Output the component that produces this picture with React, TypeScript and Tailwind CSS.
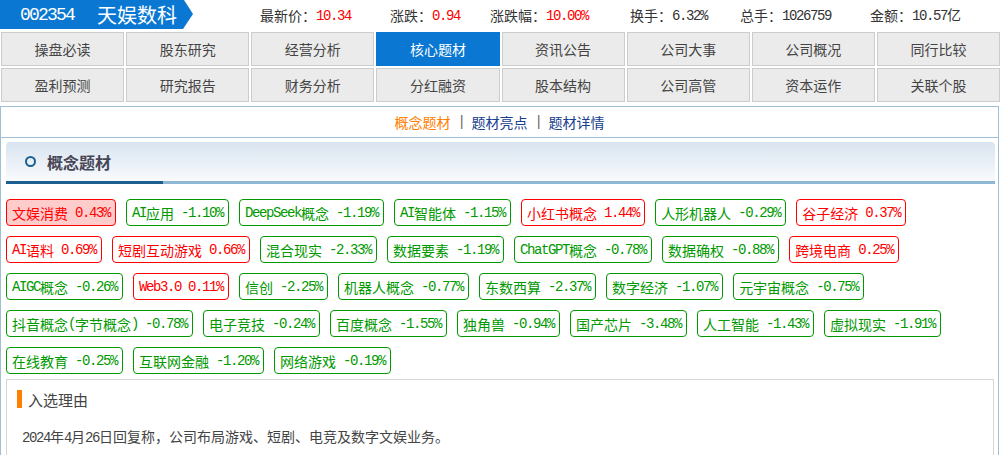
import React from 'react';

type Tag = { name: string; pct: string; up: boolean; hot?: boolean };

const navRows = [
  ['操盘必读', '股东研究', '经营分析', '核心题材', '资讯公告', '公司大事', '公司概况', '同行比较'],
  ['盈利预测', '研究报告', '财务分析', '分红融资', '股本结构', '公司高管', '资本运作', '关联个股'],
];

const stats = [
  { label: '最新价：', value: '10.34', red: true, w: 'w-[130px]' },
  { label: '涨跌：', value: '0.94', red: true, w: 'w-[100px]' },
  { label: '涨跌幅：', value: '10.00%', red: true, w: 'w-[140px]' },
  { label: '换手：', value: '6.32%', red: false, w: 'w-[110px]' },
  { label: '总手：', value: '1026759', red: false, w: 'w-[130px]' },
  { label: '金额：', value: '10.57亿', red: false, w: 'w-[120px]' },
];

const tags: Tag[] = [
  { name: '文娱消费', pct: '0.43%', up: true, hot: true },
  { name: 'AI应用', pct: '-1.10%', up: false },
  { name: 'DeepSeek概念', pct: '-1.19%', up: false },
  { name: 'AI智能体', pct: '-1.15%', up: false },
  { name: '小红书概念', pct: '1.44%', up: true },
  { name: '人形机器人', pct: '-0.29%', up: false },
  { name: '谷子经济', pct: '0.37%', up: true },
  { name: 'AI语料', pct: '0.69%', up: true },
  { name: '短剧互动游戏', pct: '0.66%', up: true },
  { name: '混合现实', pct: '-2.33%', up: false },
  { name: '数据要素', pct: '-1.19%', up: false },
  { name: 'ChatGPT概念', pct: '-0.78%', up: false },
  { name: '数据确权', pct: '-0.88%', up: false },
  { name: '跨境电商', pct: '0.25%', up: true },
  { name: 'AIGC概念', pct: '-0.26%', up: false },
  { name: 'Web3.0', pct: '0.11%', up: true },
  { name: '信创', pct: '-2.25%', up: false },
  { name: '机器人概念', pct: '-0.77%', up: false },
  { name: '东数西算', pct: '-2.37%', up: false },
  { name: '数字经济', pct: '-1.07%', up: false },
  { name: '元宇宙概念', pct: '-0.75%', up: false },
  { name: '抖音概念(字节概念)', pct: '-0.78%', up: false },
  { name: '电子竞技', pct: '-0.24%', up: false },
  { name: '百度概念', pct: '-1.55%', up: false },
  { name: '独角兽', pct: '-0.94%', up: false },
  { name: '国产芯片', pct: '-3.48%', up: false },
  { name: '人工智能', pct: '-1.43%', up: false },
  { name: '虚拟现实', pct: '-1.91%', up: false },
  { name: '在线教育', pct: '-0.25%', up: false },
  { name: '互联网金融', pct: '-1.20%', up: false },
  { name: '网络游戏', pct: '-0.19%', up: false },
];

// half-width runs get a mono face squeezed to 7px per char, like the old songti layout
const Mixed: React.FC<{ text: string }> = ({ text }) => {
  const parts = text.split(/([\x20-\x7e]+)/).filter(Boolean);
  return (
    <>
      {parts.map((p, i) =>
        /^[\x20-\x7e]+$/.test(p) ? (
          <span key={i} className="font-['Liberation_Mono',monospace] tracking-[-1.4px] whitespace-pre">
            {p}
          </span>
        ) : (
          <span key={i}>{p}</span>
        )
      )}
    </>
  );
};

const TagChip: React.FC<{ tag: Tag }> = ({ tag }) => (
  <div
    className={`h-[27px] flex items-center px-[5px] rounded-[4px] border text-[14px] leading-none ${
      tag.up ? 'border-[#ff0000] text-[#ff0000]' : 'border-[#009900] text-[#009900]'
    } ${tag.hot ? 'bg-[#ffcccc]' : 'bg-white'}`}
  >
    <Mixed text={`${tag.name} ${tag.pct}`} />
  </div>
);

export default function App() {
  return (
    <div className="w-[1001px] h-[455px] overflow-hidden bg-white font-['Noto_Sans_CJK_SC',sans-serif] text-[#333]">
      {/* stock header */}
      <div className="h-[30px] flex items-start">
        <div className="w-[194px] h-[29px] bg-[#0a78d2] text-white flex items-center [clip-path:polygon(0_0,184px_0,193px_48%,183px_100%,0_100%)]">
          <span className="ml-[20px] text-[18px] font-['Liberation_Mono',monospace] tracking-[-1.8px] leading-none">002354</span>
          <span className="ml-[23px] text-[20px] leading-none">天娱数科</span>
        </div>
        <div className="flex h-[30px] items-center ml-[66px] text-[14px] leading-none">
          {stats.map((s) => (
            <div key={s.label} className={`${s.w} flex items-center`}>
              <span>{s.label}</span>
              <span className={s.red ? 'text-[#ff0000]' : 'text-[#333]'}>
                <Mixed text={s.value} />
              </span>
            </div>
          ))}
        </div>
      </div>

      {/* module tabs */}
      <div className="mt-[2px] px-[1px] flex flex-col gap-[2px]">
        {navRows.map((row, r) => (
          <div key={r} className="grid grid-cols-8 gap-[2px]">
            {row.map((t) => {
              const active = t === '核心题材';
              return (
                <div
                  key={t}
                  className={`h-[34px] flex items-center justify-center text-[14px] leading-none ${
                    active
                      ? 'bg-[#0a78d2] text-white border border-[#0a78d2]'
                      : 'bg-[#ebebeb] text-[#444] border border-[#cccccc]'
                  }`}
                >
                  {t}
                </div>
              );
            })}
          </div>
        ))}
      </div>

      {/* content panel */}
      <div className="mt-[4px] w-[999px] border border-[#9ebfd6] h-[400px]">
        <div className="h-[31px] flex items-center justify-center text-[14px] leading-none border-b border-[#9ebfd6]">
          <span className="text-[#ff8000]">概念题材</span>
          <span className="font-['Liberation_Mono',monospace] tracking-[-1.4px] whitespace-pre text-[#666]"> | </span>
          <span className="text-[#17408f]">题材亮点</span>
          <span className="font-['Liberation_Mono',monospace] tracking-[-1.4px] whitespace-pre text-[#666]"> | </span>
          <span className="text-[#17408f]">题材详情</span>
        </div>

        <div className="mt-[4px] ml-[5px] mr-[3px] rounded-t-[4px] bg-gradient-to-b from-[#d9e4f0] to-[#fbfcfe]">
          <div className="h-[39px] flex items-center">
            <span className="ml-[19px] w-[11px] h-[11px] rounded-full border-2 border-[#1d5f8e]" />
            <span className="ml-[11px] text-[16px] font-bold text-[#464655] leading-none">概念题材</span>
          </div>
          <div className="flex h-[3px]">
            <div className="w-[157px] bg-[#1b5e8f]" />
            <div className="flex-1 bg-[#8fb6d2]" />
          </div>
        </div>

        <div className="mt-[15px] ml-[5px] mr-[3px] flex flex-wrap gap-x-[10px] gap-y-[10px]">
          {tags.map((t) => (
            <TagChip key={t.name} tag={t} />
          ))}
        </div>

        <div className="mt-[5px] ml-[5px] mr-[4px] border border-[#d6d6d6] h-[120px]">
          <div className="mt-[10px] ml-[10px] flex items-center">
            <span className="w-[5px] h-[18px] bg-[#ff8000]" />
            <span className="ml-[6px] text-[15px] leading-none text-[#444]">入选理由</span>
          </div>
          <div className="mt-[21px] ml-[15px] text-[14px] leading-none text-[#444]">
            <Mixed text="2024年4月26日回复称，公司布局游戏、短剧、电竞及数字文娱业务。" />
          </div>
        </div>
      </div>
    </div>
  );
}
